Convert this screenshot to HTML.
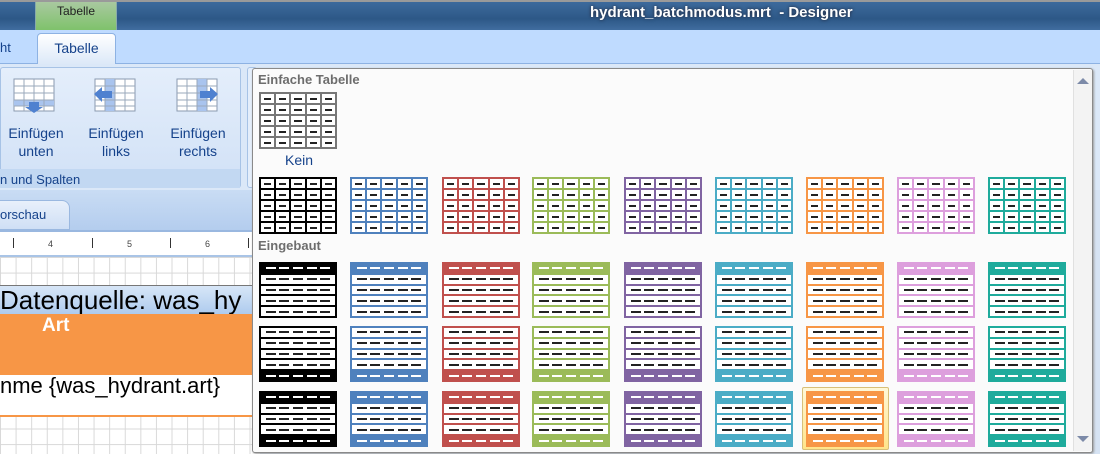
<!DOCTYPE html>
<html><head><meta charset="utf-8"><style>
*{margin:0;padding:0;box-sizing:border-box}
body{width:1100px;height:454px;overflow:hidden;position:relative;font-family:"Liberation Sans",sans-serif;background:#d6e3f3}
.abs{position:absolute}
.tbl{position:absolute;width:78px;height:57px;display:grid;grid-template-columns:repeat(5,1fr);grid-template-rows:repeat(5,1fr);gap:2px;padding:2px}
.tbl div{background:#fff;position:relative}
.tbl div:after{content:"";position:absolute;left:3px;right:3px;top:50%;height:2px;margin-top:-1px;background:#222}
.bt{position:absolute;width:78px;height:56px;display:flex;flex-direction:column;padding:2px;gap:2px}
.bt .r{flex:1;background:#fff;display:flex;justify-content:space-around;align-items:center;padding:0 3px}
.bt .r i{display:block;width:10px;height:2px;background:#222}
.bt .h{background:transparent}
.bt .h i{background:#fff}
</style></head><body>
<div class="abs" style="left:0;top:0;width:1100px;height:30px;background:linear-gradient(#3d6a9c,#2d5887 60%,#406d9f);border-top:2px solid #9a9a9a"></div>
<div class="abs" style="left:35px;top:2px;width:82px;height:28px;background:linear-gradient(#a9c9a0,#7fc26b);border-left:1px solid #8aa;border-right:1px solid #8aa;text-align:center;font-size:12px;line-height:18px;color:#222">Tabelle</div>
<div class="abs" style="left:590px;top:4px;font-size:15px;color:#fff;font-weight:bold;text-shadow:0 0 3px #223">hydrant_batchmodus.mrt&nbsp; - Designer</div>
<div class="abs" style="left:0;top:30px;width:1100px;height:34px;background:#bfdbff;border-bottom:1px solid #8db2e3"></div>
<div class="abs" style="left:0;top:40px;font-size:13px;color:#15428b">ht</div>
<div class="abs" style="left:37px;top:33px;width:79px;height:32px;background:linear-gradient(#fff,#dbe8f8);border:1px solid #8db2e3;border-bottom:none;border-radius:4px 4px 0 0;font-size:14px;color:#15428b;text-align:center;line-height:28px">Tabelle</div>
<div class="abs" style="left:0;top:64px;width:1100px;height:126px;background:#dbe8f8"></div>
<div class="abs" style="left:0;top:67px;width:241px;height:121px;background:linear-gradient(#e4eefb,#d1e1f6);border:1px solid #a7c3e6;border-radius:3px"></div>
<div class="abs" style="left:0;top:169px;width:240px;height:19px;background:#c2d8f2"></div>
<div class="abs" style="left:0;top:172px;font-size:13px;color:#15428b">n und Spalten</div>
<div class="abs" style="left:247px;top:67px;width:10px;height:121px;border:1px solid #a7c3e6;border-radius:3px;background:#e4eefb"></div>
<svg class="abs" style="left:13px;top:78px" width="42" height="36"><rect x="1" y="1" width="40" height="32" fill="#fff" stroke="#8a9ab0"/><rect x="1" y="22" width="40" height="6" fill="#a9c4ee"/><g stroke="#9aa8bb"><path d="M1 8h40M1 15h40M1 22h40M1 28h40M11 1v32M21 1v32M31 1v32"/></g><path d="M16 24h10v5h4l-9 6-9-6h4z" fill="#4f81d0"/></svg>
<svg class="abs" style="left:94px;top:78px" width="42" height="36"><rect x="1" y="1" width="40" height="32" fill="#fff" stroke="#8a9ab0"/><rect x="11" y="1" width="10" height="32" fill="#a9c4ee"/><g stroke="#9aa8bb"><path d="M1 8h40M1 15h40M1 22h40M1 28h40M11 1v32M21 1v32M31 1v32"/></g><path d="M0 16l8-7v4h10v7H8v4z" fill="#4f81d0"/></svg>
<svg class="abs" style="left:176px;top:78px" width="42" height="36"><rect x="1" y="1" width="40" height="32" fill="#fff" stroke="#8a9ab0"/><rect x="21" y="1" width="10" height="32" fill="#a9c4ee"/><g stroke="#9aa8bb"><path d="M1 8h40M1 15h40M1 22h40M1 28h40M11 1v32M21 1v32M31 1v32"/></g><path d="M42 16l-8-7v4H24v7h10v4z" fill="#4f81d0"/></svg>
<div class="abs" style="left:0;top:124px;width:72px;text-align:center;font-size:14px;line-height:18px;color:#15428b">Einfügen<br>unten</div>
<div class="abs" style="left:80px;top:124px;width:72px;text-align:center;font-size:14px;line-height:18px;color:#15428b">Einfügen<br>links</div>
<div class="abs" style="left:162px;top:124px;width:72px;text-align:center;font-size:14px;line-height:18px;color:#15428b">Einfügen<br>rechts</div>
<div class="abs" style="left:0;top:190px;width:260px;height:40px;background:linear-gradient(#c9dcf4,#b4cdee)"></div>
<div class="abs" style="left:0;top:200px;width:70px;height:30px;background:linear-gradient(#e8f0fb,#cfdff5);border:1px solid #9ab8e0;border-left:none;border-radius:0 8px 0 0"></div>
<div class="abs" style="left:0;top:207px;font-size:13px;color:#15428b">orschau</div>
<div class="abs" style="left:0;top:230px;width:260px;height:27px;background:#fff;border-top:2px solid #9ab8e0;border-bottom:2px solid #a9c4e6"></div>
<div class="abs" style="left:13px;top:238px;width:1px;height:10px;background:#333"></div>
<div class="abs" style="left:92px;top:238px;width:1px;height:10px;background:#333"></div>
<div class="abs" style="left:170px;top:238px;width:1px;height:10px;background:#333"></div>
<div class="abs" style="left:248px;top:238px;width:1px;height:10px;background:#333"></div>
<div class="abs" style="left:48px;top:239px;font-size:9px;color:#444">4</div>
<div class="abs" style="left:127px;top:239px;font-size:9px;color:#444">5</div>
<div class="abs" style="left:205px;top:239px;font-size:9px;color:#444">6</div>
<div class="abs" style="left:0;top:257px;width:260px;height:197px;background-color:#fff;background-image:linear-gradient(90deg,#d8d8d8 1px,transparent 1px),linear-gradient(#d8d8d8 1px,transparent 1px);background-size:15.6px 15.6px"></div>
<div class="abs" style="left:0;top:285px;width:260px;height:29px;background:linear-gradient(#d7e6f7,#aecbee);border-top:1px solid #777;font-size:26px;line-height:28px;color:#000;white-space:nowrap;overflow:hidden">Datenquelle: was_hy</div>
<div class="abs" style="left:0;top:314px;width:260px;height:61px;background:#f79646"></div>
<div class="abs" style="left:42px;top:315px;font-size:19px;font-weight:bold;color:#fff">Art</div>
<div class="abs" style="left:0;top:375px;width:260px;height:42px;background:#fff;border-bottom:2px solid #f79646"></div>
<div class="abs" style="left:0;top:373px;font-size:22px;color:#000;white-space:nowrap">nme {was_hydrant.art}</div>
<div class="abs" style="left:252px;top:68px;width:841px;height:385px;background:#fbfbfb;border:1px solid #8a8a8a;border-radius:3px;box-shadow:1px 1px 2px #999"></div>
<div class="abs" style="left:1073px;top:70px;width:19px;height:381px;background:#f3f3f3;border-left:1px solid #e0e0e0"></div>
<div class="abs" style="left:1077px;top:78px;width:0;height:0;border-left:6px solid transparent;border-right:6px solid transparent;border-bottom:6px solid #7c8aa8"></div>
<div class="abs" style="left:1077px;top:436px;width:0;height:0;border-left:6px solid transparent;border-right:6px solid transparent;border-top:6px solid #7c8aa8"></div>
<div class="abs" style="left:258px;top:72px;font-size:13px;font-weight:bold;color:#6d6d6d">Einfache Tabelle</div>
<div class="abs" style="left:258px;top:238px;font-size:13px;font-weight:bold;color:#6d6d6d">Eingebaut</div>
<div class="abs" style="left:259px;top:152px;width:80px;text-align:center;font-size:14px;color:#15428b">Kein</div>
<div class="abs" style="left:802px;top:387px;width:87px;height:63px;background:linear-gradient(#fff8d8,#ffe48a);border:1px solid #d8c078;border-radius:2px"></div>
<div id="g"></div>
<script>
var cols=["#000000","#4f81bd","#c0504d","#9bbb59","#8064a2","#4bacc6","#f79646","#dd9fdd","#1fab9c"];
var xs=[259,350,442,532,624,715,806,897,988];
var h='';
function grid(x,y,c){var s='<div class="tbl" style="left:'+x+'px;top:'+y+'px;background:'+c+'">';for(var i=0;i<25;i++)s+='<div></div>';return s+'</div>';}
function bt(x,y,c,hd,ft){var s='<div class="bt" style="left:'+x+'px;top:'+y+'px;background:'+c+'">';for(var r=0;r<5;r++){var hh=(r==0&&hd)||(r==4&&ft);s+='<div class="r'+(hh?' h':'')+'"><i></i><i></i><i></i><i></i><i></i></div>';}return s+'</div>';}
h+=grid(259,92,'#777');
for(var i=0;i<9;i++){h+=grid(xs[i],177,cols[i]);h+=bt(xs[i],262,cols[i],1,0);h+=bt(xs[i],326,cols[i],0,1);h+=bt(xs[i],391,cols[i],1,1);}
document.getElementById('g').innerHTML=h;
</script>
</body></html>
